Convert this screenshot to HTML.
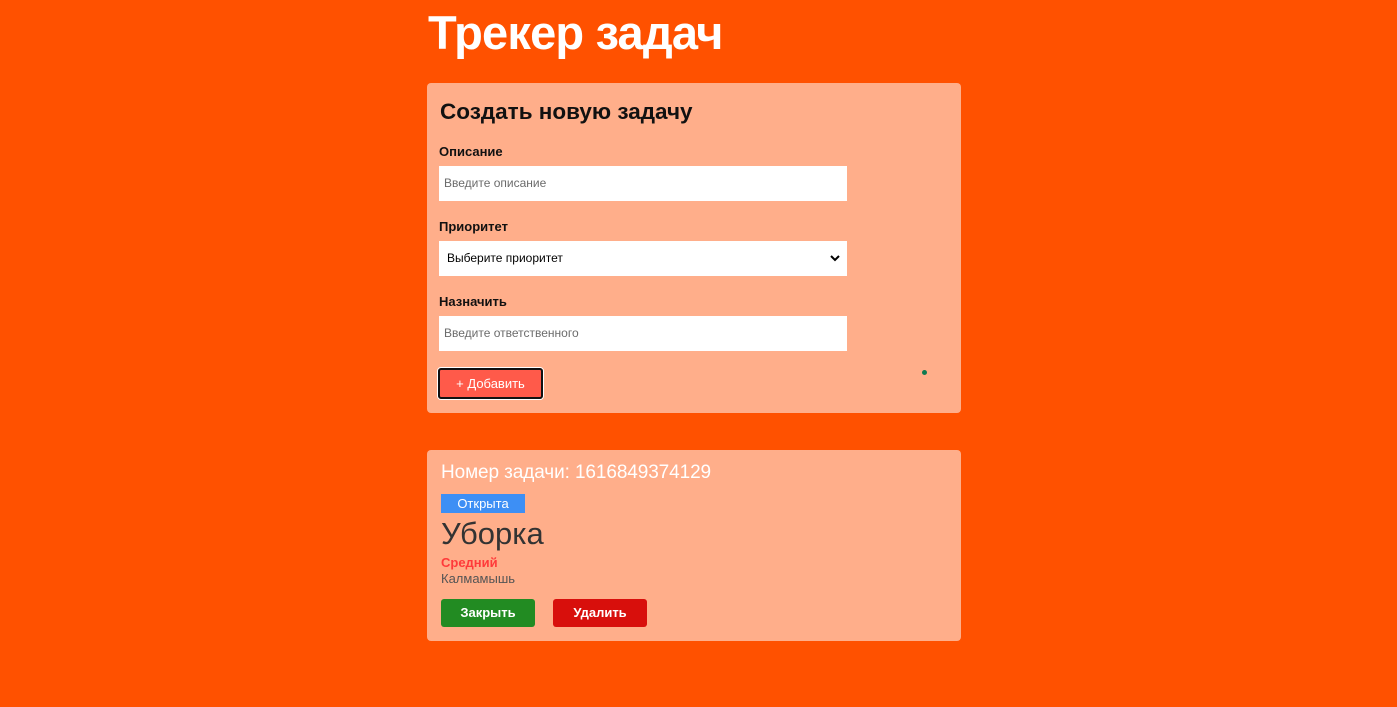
<!DOCTYPE html>
<html><head><meta charset="utf-8"><style>
*{box-sizing:border-box;margin:0;padding:0}
body{width:1397px;height:707px;background:#ff5100;font-family:"Liberation Sans",sans-serif;position:relative;overflow:hidden}
.a{position:absolute;white-space:nowrap}
.card{position:absolute;left:427px;width:534px;background:#ffae8a;border-radius:4px}
.inp{position:absolute;left:439px;width:408px;height:35px;background:#fff;font-size:12px;color:#6b6b6b;padding:0 0 0 5px;line-height:35px}
.lbl{font-size:13px;font-weight:bold;color:#111}
.btn{position:absolute;height:28px;border-radius:3px;color:#fff;font-weight:bold;font-size:13px;text-align:center;line-height:28px}
</style></head><body>
<div class="a" style="left:428px;top:5px;font-size:47px;font-weight:bold;color:#fff;letter-spacing:-0.8px">Трекер задач</div>
<div class="card" style="top:83px;height:330px"></div>
<div class="a" style="left:440px;top:99px;font-size:22.5px;font-weight:bold;color:#111">Создать новую задачу</div>
<div class="a lbl" style="left:439px;top:144px">Описание</div>
<div class="inp" style="top:166px">Введите описание</div>
<div class="a lbl" style="left:439px;top:219px">Приоритет</div>
<div class="inp" style="top:241px;color:#000;padding-left:8px">Выберите приоритет
<svg style="position:absolute;right:7px;top:14px" width="10" height="7" viewBox="0 0 10 7"><path d="M1 1l4 4 4-4" stroke="#000" stroke-width="2" fill="none"/></svg></div>
<div class="a lbl" style="left:439px;top:294px">Назначить</div>
<div class="inp" style="top:316px">Введите ответственного</div>
<div class="a" style="left:437px;top:367px;width:107px;height:33px;border:1px solid #fff;border-radius:4px"><div style="width:105px;height:31px;border:2px solid #111;border-radius:3px;background:#ff5a4a;color:#fff;font-size:13px;text-align:center;line-height:27px">+ Добавить</div></div>
<div class="a" style="left:922px;top:370px;width:5px;height:5px;border-radius:50%;background:#0f7a50"></div>
<div class="card" style="top:450px;height:191px"></div>
<div class="a" style="left:441px;top:462px;font-size:19px;color:#fff;letter-spacing:-0.1px">Номер задачи: 1616849374129</div>
<div class="a" style="left:441px;top:494px;width:84px;height:19px;background:#3d8ff5;color:#fff;font-size:13px;text-align:center;line-height:19px">Открыта</div>
<div class="a" style="left:441px;top:516px;font-size:31px;color:#333">Уборка</div>
<div class="a" style="left:441px;top:555px;font-size:13px;font-weight:bold;color:#ff3a3a">Средний</div>
<div class="a" style="left:441px;top:571px;font-size:13px;color:#555">Калмамышь</div>
<div class="btn" style="left:441px;top:599px;width:94px;background:#228b22">Закрыть</div>
<div class="btn" style="left:553px;top:599px;width:94px;background:#d80f0c">Удалить</div>
</body></html>
